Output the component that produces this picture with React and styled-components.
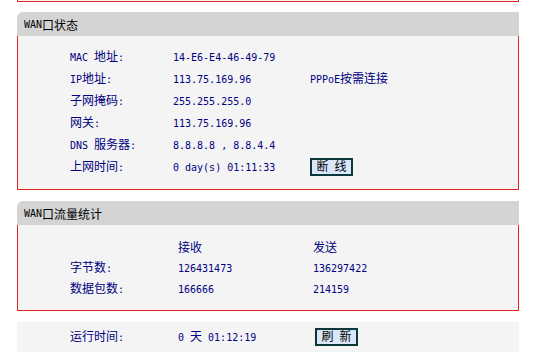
import React from "react";
import styled, { createGlobalStyle } from "styled-components";

const GlobalStyle = createGlobalStyle`
    body {
        margin: 0;
        background: #ffffff;
        font-family: "Noto Sans CJK SC", sans-serif;
        font-size: 12px;
    }
`;

const Page = styled.div`
    width: 502px;
    margin-left: 17px;
    display: flex;
    flex-direction: column;
`;

const Stub = styled.div`
    height: 1px;
    background: #f4f4f4;
    border: 1px solid #e3231c;
    border-top: none;
    margin-bottom: 10px;
`;

const Header = styled.div`
    height: 24px;
    background: #d4d4d4;
    border-top-left-radius: 6px;
    display: flex;
    align-items: center;
    padding-left: 7px;
    color: #000000;
`;

const Body = styled.div`
    background: #f4f4f4;
    border: 1px solid #e3231c;
    border-top: none;
    padding: ${p => p.$pad || "10px 0 11px 52px"};
    margin-bottom: 11px;
    display: grid;
    grid-template-columns: ${p => p.$cols};
    grid-auto-rows: ${p => p.$row || "22px"};
    align-items: center;
    color: #000080;
`;

const Plain = styled(Body)`
    border: none;
    height: 30px;
    padding: 0 0 0 53px;
    grid-auto-rows: 30px;
`;

const Cell = styled.div`
    white-space: nowrap;
    line-height: 14px;
`;

const Lat = styled.span`
    font-family: "DejaVu Sans Mono", monospace;
    font-size: 10px;
`;

const Button = styled.button`
    width: 43px;
    height: 18px;
    padding: 0;
    background: #dae6f9;
    border: 2px solid #0c3838;
    color: #000000;
    font-family: "Noto Sans CJK SC", sans-serif;
    font-size: 12px;
    line-height: 12px;
`;

const T = ({ children }) => {
    const parts = String(children).split(/([\u0000-\u00ff]+)/).filter(Boolean);
    return parts.map((s, i) =>
        /^[\u0000-\u00ff]+$/.test(s) ? <Lat key={i}>{s}</Lat> : <React.Fragment key={i}>{s}</React.Fragment>
    );
};

const status = [
    ["MAC 地址:", "14-E6-E4-46-49-79", ""],
    ["IP地址:", "113.75.169.96", "PPPoE按需连接"],
    ["子网掩码:", "255.255.255.0", ""],
    ["网关:", "113.75.169.96", ""],
    ["DNS 服务器:", "8.8.8.8 , 8.8.4.4", ""],
];

const App = () => {
    return (
        <>
            <GlobalStyle />
            <Page>
                <Stub />
                <Header><T>WAN口状态</T></Header>
                <Body $cols="103px 137px auto">
                    {status.map(r => (
                        <React.Fragment key={r[0]}>
                            <Cell><T>{r[0]}</T></Cell>
                            <Cell><T>{r[1]}</T></Cell>
                            <Cell><T>{r[2]}</T></Cell>
                        </React.Fragment>
                    ))}
                    <Cell><T>上网时间:</T></Cell>
                    <Cell><T>0 day(s) 01:11:33</T></Cell>
                    <Cell><Button><T>断 线</T></Button></Cell>
                </Body>
                <Header><T>WAN口流量统计</T></Header>
                <Body $cols="108px 135px auto" $pad="11px 0 11px 52px" $row="21px">
                    <Cell />
                    <Cell>接收</Cell>
                    <Cell>发送</Cell>
                    <Cell>字节数<T>:</T></Cell>
                    <Cell><T>126431473</T></Cell>
                    <Cell><T>136297422</T></Cell>
                    <Cell>数据包数<T>:</T></Cell>
                    <Cell><T>166666</T></Cell>
                    <Cell><T>214159</T></Cell>
                </Body>
                <Plain $cols="108px 137px auto">
                    <Cell>运行时间<T>:</T></Cell>
                    <Cell><T>0 天 01:12:19</T></Cell>
                    <Cell><Button><T>刷 新</T></Button></Cell>
                </Plain>
            </Page>
        </>
    );
};

export default App;
